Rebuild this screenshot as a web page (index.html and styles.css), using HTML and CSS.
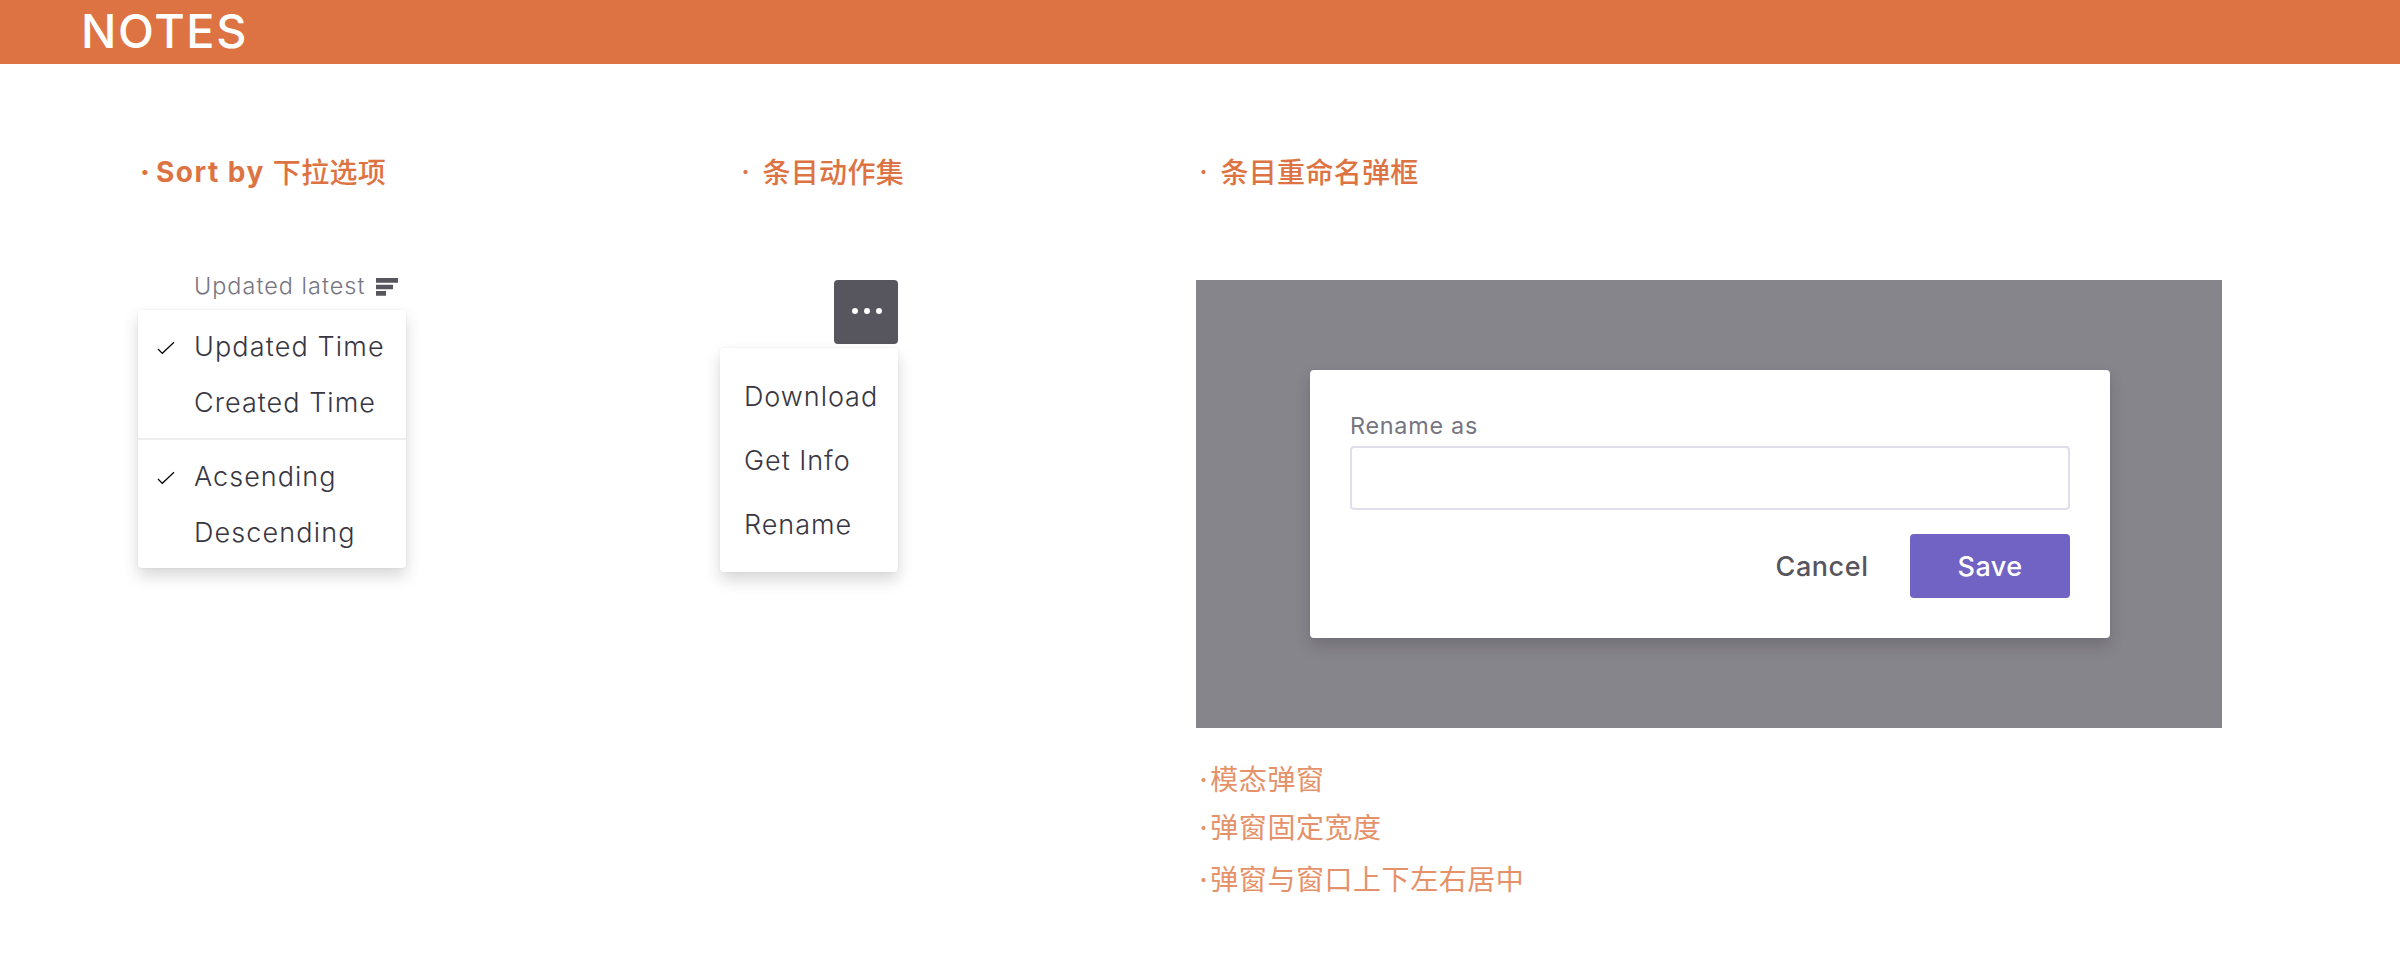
FILE: index.html
```html
<!DOCTYPE html>
<html lang="zh-CN">
<head>
<meta charset="utf-8">
<title>Notes</title>
<link rel="stylesheet" href="styles.css">
</head>
<body>
<header class="banner"><h1 class="banner-title">NOTES</h1></header>
<main class="board">
  <section class="sort">
    <h2 class="heading heading-sort"><span class="dot">·</span><span class="latin">Sort by</span><span class="cjk">下拉选项</span></h2>
    <div class="sort-trigger">
      <span class="sort-label">Updated latest</span>
      <svg class="sort-icon" width="22" height="18" viewBox="0 0 22 18"><path d="M0 0h22v4.7H0zM0 6.7h17v4.5H0zM0 13h10v4.7H0z" fill="#57555e"/></svg>
    </div>
    <div class="menu sort-menu">
      <ul class="menu-group">
        <li class="option"><svg class="check" width="18" height="14" viewBox="0 0 18 14"><path d="M1 8l4.3 4.3L17 1.2"/></svg>Updated Time</li>
        <li class="option tight">Created Time</li>
      </ul>
      <ul class="menu-group">
        <li class="option tight"><svg class="check" width="18" height="14" viewBox="0 0 18 14"><path d="M1 8l4.3 4.3L17 1.2"/></svg>Acsending</li>
        <li class="option">Descending</li>
      </ul>
    </div>
  </section>
  <section class="actions">
    <h2 class="heading heading-actions"><span class="dot">·</span><span class="cjk">条目动作集</span></h2>
    <div class="more"><svg width="30" height="6" viewBox="0 0 30 6" fill="#fff"><circle cx="3" cy="3" r="3"/><circle cx="15" cy="3" r="3"/><circle cx="27" cy="3" r="3"/></svg></div>
    <ul class="menu action-menu">
      <li class="action">Download</li>
      <li class="action">Get Info</li>
      <li class="action">Rename</li>
    </ul>
  </section>
  <section class="rename">
    <h2 class="heading heading-rename"><span class="dot">·</span><span class="cjk">条目重命名弹框</span></h2>
    <div class="overlay">
      <div class="modal">
        <label class="field-label" for="rename-field">Rename as</label>
        <input class="field" id="rename-field" type="text">
        <div class="buttons"><span class="cancel">Cancel</span><span class="save">Save</span></div>
      </div>
    </div>
    <ul class="remarks">
      <li class="remark"><span class="dot">·</span><span class="remark-text">模态弹窗</span></li>
      <li class="remark"><span class="dot">·</span><span class="remark-text">弹窗固定宽度</span></li>
      <li class="remark remark-last"><span class="dot">·</span><span class="remark-text">弹窗与窗口上下左右居中</span></li>
    </ul>
  </section>
</main>
</body>
</html>
```
FILE: styles.css
```css
* { box-sizing: border-box; }
body {
  margin: 0;
  width: 2400px;
  height: 954px;
  overflow: hidden;
  background: #fff;
  font-family: Inter, "Noto Sans CJK SC", sans-serif;
  color: #383642;
}
h1, h2, ul { margin: 0; padding: 0; font-weight: inherit; }
ul { list-style: none; }
svg { display: block; flex: none; }

.banner {
  display: flex;
  height: 64px;
  padding-left: 81px;
  background: #dd7342;
  color: #fff;
}
.banner-title { font-size: 46.8px; line-height: 62px; font-weight: 500; letter-spacing: 1.65px; }

.board {
  display: grid;
  grid-template-columns: 582px 476px 1026px;
  padding-left: 138px;
}
.sort { width: 268px; }
.actions { width: 178px; }

.heading {
  display: flex;
  align-items: center;
  height: 56px;
  margin-top: 80px;
  color: #dd7342;
  font-size: 28px;
  line-height: 56px;
  font-weight: 500;
  white-space: nowrap;
}
.dot { width: 14px; text-align: center; flex: none; }
.latin { font-weight: 700; margin-left: 4px; letter-spacing: 1.5px; }
.cjk { letter-spacing: .3px; margin-left: 10px; padding-top: 1px; }
.heading-sort .dot { font-weight: 800; }
.heading-sort .cjk { margin-left: 8px; }
.heading-actions { padding-left: 18.5px; }
.heading-rename { padding-left: .5px; }

.sort-trigger {
  display: flex;
  align-items: center;
  height: 40px;
  margin-top: 67px;
  padding-left: 56px;
  gap: 10px;
  color: #77757f;
  font-size: 23.4px;
  font-weight: 300;
  letter-spacing: 1.04px;
  white-space: nowrap;
}
.sort-label { margin-bottom: 3px; }
.menu {
  border-radius: 4px;
  background: #fff;
  box-shadow: 0 8px 16px rgba(0, 0, 0, .16), 0 0 3px rgba(0, 0, 0, .05);
  font-size: 27px;
  font-weight: 300;
  letter-spacing: 1.12px;
  white-space: nowrap;
}
.sort-menu { margin-top: 3px; }
.menu-group { padding: 8px 0; }
.menu-group + .menu-group { border-top: 2px solid #eeeef0; }
.option {
  position: relative;
  height: 56px;
  padding-left: 56px;
  line-height: 58px;
}
.tight { letter-spacing: 1.02px; }
.check {
  position: absolute;
  left: 19px;
  top: 23px;
  fill: none;
  stroke: #000;
  stroke-width: 1.2;
}

.more {
  display: flex;
  align-items: center;
  justify-content: center;
  width: 64px;
  height: 64px;
  margin: 80px 0 4px auto;
  padding: 0 0 2px 2px;
  border-radius: 4px;
  background: #57555e;
}
.action-menu { padding: 16px 0; letter-spacing: .95px; }
.action { height: 64px; padding-left: 24px; line-height: 66px; }

.overlay {
  display: flex;
  justify-content: center;
  height: 448px;
  margin-top: 80px;
  padding: 90px 0 0 2px;
  background: #87858c;
}
.modal {
  width: 800px;
  height: 268px;
  padding: 36px 40px 0;
  border-radius: 4px;
  background: #fff;
  box-shadow: 0 8px 16px rgba(0, 0, 0, .16), 0 0 3px rgba(0, 0, 0, .05);
}
.field-label { display: block; height: 40px; line-height: 40px; font-size: 23.4px; letter-spacing: .72px; color: #77757f; }
.field {
  display: block;
  width: 720px;
  height: 64px;
  border: 2px solid #e0deeb;
  border-radius: 4px;
  background: #fff;
}
.buttons {
  display: flex;
  justify-content: flex-end;
  margin-top: 24px;
  font-size: 27px;
  line-height: 66px;
  font-weight: 500;
}
.cancel { margin-right: 41.5px; color: #57555e; letter-spacing: .55px; }
.save {
  width: 160px;
  height: 64px;
  border-radius: 4px;
  background: #7163c4;
  color: #fff;
  text-align: center;
  letter-spacing: .45px;
}

.remarks { margin-top: 28px; padding-left: .5px; color: #e5926a; font-size: 28px; }
.remark { display: flex; height: 48px; line-height: 48px; }
.remark .dot { font-weight: 500; }
.remark-last { margin-top: 4px; }
.remark-text { margin-left: -.2px; letter-spacing: .55px; }
```
